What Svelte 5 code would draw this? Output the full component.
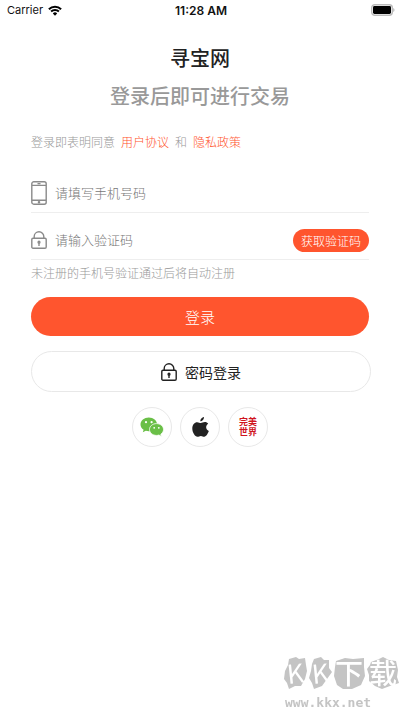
<script>
  let phone = $state("");
  let code = $state("");
</script>

{#snippet lock()}
  <svg class="lock" viewBox="0 0 16 18" aria-hidden="true">
    <rect x="0.8" y="7.2" width="14.4" height="10" rx="1.2" />
    <path d="M3.2 7V5.6a4.8 4.8 0 0 1 9.6 0V7" />
    <path d="M8 11.5v3.500" />
    <circle cx="8" cy="11.200" r="0.900" />
  </svg>
{/snippet}

<div class="status">
  <div class="carrier">
    <span>Carrier</span>
    <svg class="wifi" viewBox="0 0 14 11" aria-hidden="true">
      <path d="M0.9 4.2a8.7 8.7 0 0 1 12.2 0M3.1 6.5a5.6 5.6 0 0 1 7.8 0" />
      <path class="dot" d="M4.8 8.4a3.2 3.2 0 0 1 4.4 0L7 10.8z" />
    </svg>
  </div>
  <span class="time">11:28 AM</span>
  <svg class="battery" viewBox="0 0 24 12" aria-hidden="true">
    <rect class="case" x="0.7" y="0.7" width="20.6" height="10.6" rx="3" />
    <rect x="2" y="2" width="18" height="8" rx="1.4" />
    <path class="tip" d="M22.2 4c1.8 0.6 1.8 3.4 0 4z" />
  </svg>
</div>

<main>
  <h1>寻宝网</h1>
  <h2>登录后即可进行交易</h2>

  <p class="terms">
    <span>登录即表明同意</span>
    <a href="#agreement">用户协议</a>
    <span>和</span>
    <a href="#privacy">隐私政策</a>
  </p>

  <form onsubmit={(e) => e.preventDefault()}>
    <div class="field">
      <svg class="phone" viewBox="0 0 16 24" aria-hidden="true">
        <rect x="0.8" y="0.8" width="14.4" height="22.4" rx="2" />
        <path d="M1 4.4h14M1 19.2h14M6.5 2.6h3" />
        <circle cx="8" cy="21.2" r="0.6" />
      </svg>
      <input type="tel" aria-label="手机号码" placeholder="请填写手机号码" bind:value={phone} />
    </div>

    <div class="field">
      {@render lock()}
      <input type="text" aria-label="验证码" placeholder="请输入验证码" bind:value={code} />
      <button type="button" class="get-code">获取验证码</button>
    </div>

    <p class="hint">未注册的手机号验证通过后将自动注册</p>

    <button type="submit" class="login">登录</button>
    <button type="button" class="password">
      {@render lock()}
      <span>密码登录</span>
    </button>
  </form>

  <div class="social">
    <button type="button" aria-label="微信登录">
      <svg class="wechat" viewBox="0 0 24 20" aria-hidden="true">
        <path d="M8.8 0.6C4.2 0.6 0.5 3.6 0.5 7.4c0 2.2 1.2 4.1 3.1 5.4L2.8 15.3l3-1.5c1 .3 2 .4 3 .4 4.6 0 8.3-3 8.3-6.8S13.4 .6 8.8 .6z" />
        <path class="front" d="M16.5 6.6c-3.9 0-7 2.6-7 5.900s3.100 5.900 7 5.900c.8 0 1.600-.1 2.400-.4l2.600 1.400-.7-2.200c1.700-1.100 2.700-2.800 2.700-4.700 0-3.300-3.100-5.900-7-5.900z" />
        <g class="eyes">
          <circle cx="6" cy="5.2" r="1.1" />
          <circle cx="11.6" cy="5.2" r="1.1" />
          <circle cx="14.2" cy="10.8" r="0.9" />
          <circle cx="18.8" cy="10.8" r="0.9" />
        </g>
      </svg>
    </button>
    <button type="button" aria-label="Apple 登录">
      <svg class="apple" viewBox="0 0 17 20" aria-hidden="true">
        <path d="M12 0c.2 2.2-1.8 4.3-3.7 4.3C8.1 2.2 10 .2 12 0z" />
        <path d="M16.2 6.8c-3 1.8-2.6 5.8.6 7.2-.8 2.3-2.5 5.6-4.5 5.7-1.3 0-1.9-.8-3.4-.8s-2.2.8-3.4.8C3 19.7.3 15.3.3 11.4c0-3.8 2.3-6.2 4.9-6.2 1.5 0 2.6.9 3.6.9s2.3-1 4.1-1c1.3 0 2.5.6 3.3 1.7z" />
      </svg>
    </button>
    <button type="button">
      <span class="perfect">完美世界</span>
    </button>
  </div>
</main>

<div class="watermark">
  <svg viewBox="0 0 117 36" aria-hidden="true">
    <path d="M6 3l7-2 3 2 6-1 1 7 1 6-2 8-4 7-6 0-6 3-2-6-3-4 1-8 3-6z" />
    <path d="M31 3l7-2 3 3 5 0 0 8 3 4-5 7-5 7-8 3-2-6-3-5 2-7 1-7z" />
    <path d="M53 5l9-3 8 1 11-1 0 9 1 9-4 9-9 4-9 0-6-4-3-9 1-9z" />
    <path d="M88 6l8-3 4-2 6 3 7 1 2 9-1 7 2 6-9 3-8 3-7-3-6-5 0-6-2-6 3-4z" />
    <text x="4" y="27" transform="rotate(-6 13 18)">K</text>
    <text x="29" y="27" transform="rotate(-6 38 18)">K</text>
    <text class="han" x="52" y="28">下</text>
    <text class="han" x="86" y="28">载</text>
  </svg>
  <span>www.kkx.net</span>
</div>

<style>
  :global(body) {
    background: #fff;
    font-family: "Noto Sans CJK SC", "Noto Sans", sans-serif;
  }

  h1,
  h2,
  p {
    margin: 0;
  }

  button {
    border: 0;
    padding: 0;
    background: none;
    font-family: inherit;
    cursor: pointer;
  }

  svg {
    flex: none;
    fill: none;
  }

  .status {
    display: grid;
    grid-template-columns: 1fr auto 1fr;
    align-items: center;
    height: 20px;
    padding: 0 5px 0 7px;
    font-family: Inter, sans-serif;
    font-size: 11px;
    color: #111;
  }

  .carrier {
    display: flex;
    align-items: center;
    gap: 5px;
  }

  .wifi {
    width: 14px;
    height: 11px;
    stroke: #000;
    stroke-width: 2;
  }

  .wifi .dot {
    fill: #000;
    stroke: none;
  }

  .time {
    font-size: 12px;
    font-weight: 600;
  }

  .battery {
    justify-self: end;
    width: 24px;
    height: 12px;
    fill: #000;
  }

  .battery .case {
    fill: none;
    stroke: #bbb;
    stroke-width: 1.4;
  }

  .battery .tip {
    fill: #bbb;
  }

  main {
    padding: 19px 31px 0;
  }

  h1,
  h2 {
    font-size: 20px;
    font-weight: 500;
    line-height: 38px;
    text-align: center;
  }

  h1 {
    color: #222;
  }

  h2 {
    color: #999;
  }

  .terms {
    display: flex;
    gap: 6px;
    margin-top: 17px;
    font-size: 12px;
    font-weight: 300;
    line-height: 20px;
    color: #999;
  }

  a {
    color: #ff552e;
    text-decoration: none;
  }

  form {
    margin-top: 22px;
  }

  .field {
    display: flex;
    align-items: center;
    gap: 8px;
    height: 38px;
    margin-bottom: 8px;
    border-bottom: 1px solid #eee;
  }

  .phone {
    width: 16px;
    height: 24px;
    stroke: #8a8a8a;
    stroke-width: 1.4;
  }

  .lock {
    width: 16px;
    height: 18px;
    stroke: #8a8a8a;
    stroke-width: 1.4;
  }

  input {
    flex: 1;
    min-width: 0;
    border: 0;
    padding: 0;
    outline: none;
    background: none;
    font-family: inherit;
    font-size: 13px;
    font-weight: 300;
    line-height: 20px;
    color: #333;
  }

  input::placeholder {
    color: #777;
    opacity: 1;
  }

  .get-code {
    padding: 0 8px;
    border-radius: 12px;
    background: #ff552e;
    font-size: 12px;
    font-weight: 300;
    line-height: 23px;
    color: #fff;
  }

  .hint {
    margin-top: -5px;
    font-size: 12px;
    font-weight: 300;
    line-height: 20px;
    color: #999;
  }

  .login,
  .password {
    width: 100%;
    height: 39px;
    border-radius: 21px;
  }

  .login {
    display: block;
    margin-top: 14px;
    background: #ff552e;
    font-size: 15px;
    font-weight: 300;
    line-height: 36px;
    color: #fff;
  }

  .password {
    display: flex;
    align-items: center;
    justify-content: center;
    gap: 8px;
    box-sizing: content-box;
    margin-top: 15px;
    border: 1px solid #e8e8e8;
    font-size: 14px;
    line-height: 20px;
    color: #222;
  }

  .password .lock {
    stroke: #222;
  }

  .social {
    display: flex;
    justify-content: center;
    gap: 8px;
    margin-top: 15px;
  }

  .social button {
    display: flex;
    align-items: center;
    justify-content: center;
    width: 40px;
    height: 40px;
    border: 1px solid #e8e8e8;
    border-radius: 50%;
  }

  .wechat {
    width: 24px;
    height: 20px;
    fill: #6abf47;
  }

  .wechat .front {
    stroke: #fff;
    stroke-width: 0.8;
  }

  .eyes {
    fill: #fff;
  }

  .apple {
    width: 17px;
    height: 20px;
    fill: #222;
  }

  .perfect {
    width: 18px;
    font-size: 9px;
    font-weight: 700;
    line-height: 10px;
    word-break: break-all;
    color: #d0141e;
  }

  .watermark {
    position: fixed;
    right: 0;
    bottom: 0;
    width: 117px;
    color: #c4c4c4;
    pointer-events: none;
  }

  .watermark svg {
    display: block;
    width: 117px;
    height: 36px;
    overflow: visible;
    fill: #c4c4c4;
  }

  .watermark text {
    fill: #fff;
    font-family: "Noto Sans CJK SC", sans-serif;
    font-size: 26px;
    font-weight: 400;
  }

  .watermark .han {
    font-size: 28px;
    font-weight: 500;
  }

  .watermark span {
    display: block;
    padding: 4px 0 0 2px;
    font-family: "DejaVu Sans Mono", monospace;
    font-size: 13px;
    font-weight: 700;
    line-height: 14px;
  }
</style>
